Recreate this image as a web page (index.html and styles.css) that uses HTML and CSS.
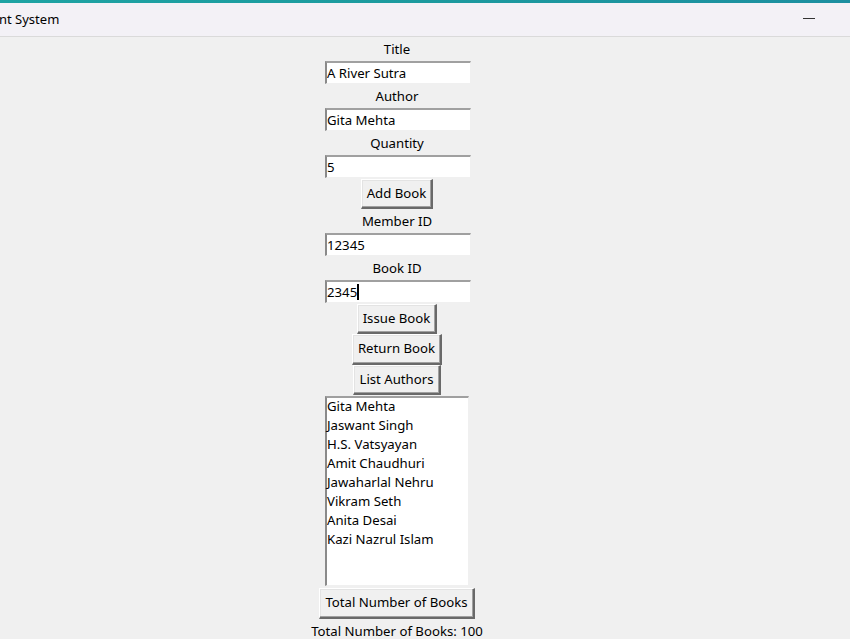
FILE: index.html
```html
<!DOCTYPE html>
<html>
<head>
<meta charset="utf-8">
<link rel="stylesheet" href="styles.css">
</head>
<body>
<div class="accent"></div>
<header class="titlebar">
  <span class="title">nt System</span>
  <span class="minimize"></span>
</header>
<main class="app">
  <div class="label">Title</div>
  <div class="entry">A River Sutra</div>
  <div class="label">Author</div>
  <div class="entry">Gita Mehta</div>
  <div class="label">Quantity</div>
  <div class="entry">5</div>
  <div class="button">Add Book</div>
  <div class="label">Member ID</div>
  <div class="entry">12345</div>
  <div class="label">Book ID</div>
  <div class="entry">2345<span class="caret"></span></div>
  <div class="button">Issue Book</div>
  <div class="button tall">Return Book</div>
  <div class="button">List Authors</div>
  <ul class="listbox">
    <li>Gita Mehta</li>
    <li>Jaswant Singh</li>
    <li>H.S. Vatsyayan</li>
    <li>Amit Chaudhuri</li>
    <li>Jawaharlal Nehru</li>
    <li>Vikram Seth</li>
    <li>Anita Desai</li>
    <li>Kazi Nazrul Islam</li>
  </ul>
  <div class="button wide">Total Number of Books</div>
  <div class="label">Total Number of Books: 100</div>
</main>
</body>
</html>
```
FILE: styles.css
```css
html, body {
  margin: 0;
  padding: 0;
  width: 850px;
  height: 639px;
  overflow: hidden;
  background: #f0f0f0;
  font-family: "Noto Sans", "Open Sans", sans-serif;
  color: #000;
}
.accent {
  height: 3px;
  background: linear-gradient(90deg, #1ea3a3, #1b9a9e 50%, #1c8fa0);
}
.titlebar {
  height: 33px;
  background: #f3f1f6;
  border-bottom: 1px solid #dadada;
  position: relative;
  display: flex;
  align-items: center;
}
.title {
  font-size: 13px;
  margin-left: -1px;
  margin-top: -2px;
}
.minimize {
  position: absolute;
  left: 803px;
  top: 15px;
  width: 12px;
  height: 1px;
  background: #333;
}
.app {
  width: 794px;
  display: flex;
  flex-direction: column;
  align-items: center;
  font-size: 13.2px;
}
.label {
  height: 24px;
  line-height: 24px;
  white-space: nowrap;
}
.entry {
  box-sizing: border-box;
  width: 146px;
  height: 23px;
  background: #fff;
  border-top: 2px solid #a0a0a0;
  border-left: 2px solid #8a8a8a;
  border-right: 1px solid #f0f0f0;
  border-bottom: 1px solid #f0f0f0;
  padding-left: 0;
  line-height: 19px;
  display: flex;
  align-items: center;
  margin-left: 2px;
}
.caret {
  display: inline-block;
  width: 2px;
  height: 16px;
  background: #000;
}
.button {
  box-sizing: border-box;
  height: 30px;
  padding: 0 5px;
  line-height: 26px;
  background: #f0f0f0;
  border-top: 1px solid #fff;
  border-left: 1px solid #fff;
  border-right: 2px solid #696969;
  border-bottom: 2px solid #696969;
  box-shadow: inset -1px -1px 0 #a0a0a0, inset 1px 1px 0 #e3e3e3;
  white-space: nowrap;
  margin-top: 1px;
}
.button + .button {
  margin-top: 0;
}
.button.tall {
  height: 31px;
  line-height: 27px;
}
.listbox {
  box-sizing: border-box;
  list-style: none;
  margin: 1px 0 2px 0;
  padding: 0;
  width: 144px;
  height: 190px;
  background: #fff;
  border-top: 2px solid #a0a0a0;
  border-left: 2px solid #8a8a8a;
  border-right: 1px solid #f0f0f0;
  border-bottom: 1px solid #f0f0f0;
}
.listbox li {
  height: 19px;
  line-height: 17px;
  white-space: nowrap;
}
.button.wide {
  height: 31px;
  line-height: 27px;
  margin-top: 0;
}
```
